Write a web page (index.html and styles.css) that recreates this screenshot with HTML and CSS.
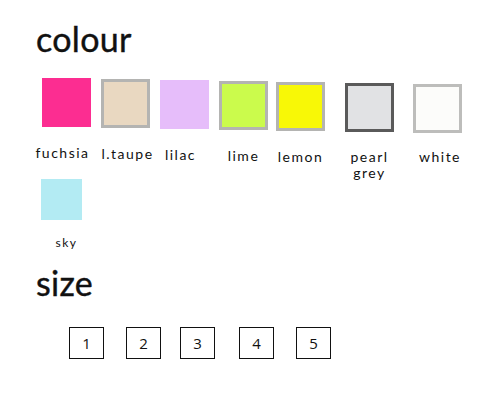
FILE: index.html
```html
<html lang="en"><head>
    <meta charset="UTF-8">
    <meta name="viewport" content="width=device-width, initial-scale=1.0">
    <title>Options</title>
    <link rel="stylesheet" href="styles.css">
</head>

<body>
    <div class="page">
        <h2 class="title">colour</h2>
        <div class="swatches">
            <div class="swatch_item"><div class="swatch fuchsia"></div><span>fuchsia</span></div>
            <div class="swatch_item"><div class="swatch taupe"></div><span>l.taupe</span></div>
            <div class="swatch_item"><div class="swatch lilac"></div><span>lilac</span></div>
            <div class="swatch_item"><div class="swatch lime"></div><span>lime</span></div>
            <div class="swatch_item"><div class="swatch lemon"></div><span>lemon</span></div>
            <div class="swatch_item"><div class="swatch pearl"></div><span>pearl<br>grey</span></div>
            <div class="swatch_item"><div class="swatch white"></div><span>white</span></div>
        </div>
        <div class="swatches row2">
            <div class="swatch_item small"><div class="swatch sky"></div><span>sky</span></div>
        </div>

        <h2 class="title size_title">size</h2>
        <div class="sizes">
            <div class="size_box">1</div>
            <div class="size_box">2</div>
            <div class="size_box">3</div>
            <div class="size_box">4</div>
            <div class="size_box">5</div>
        </div>
    </div>
</body>
</html>
```

FILE: styles.css
```css
body {
    margin: 0;
    background-color: #fff;
    font-family: "Lato", "Open Sans", sans-serif;
    color: #111;
}

.page {
    padding: 21px 0 0 36px;
}

.title {
    margin: 0;
    font-size: 34px;
    font-weight: 400;
    line-height: 36px;
    letter-spacing: 0.3px;
    -webkit-text-stroke: 0.4px #111;
}

.swatches {
    display: flex;
    gap: 10px;
    margin: 21px 0 0 6px;
}

.swatch_item {
    width: 49px;
    display: flex;
    flex-direction: column;
    align-items: center;
}

.swatch_item>span {
    white-space: nowrap;
    text-align: center;
    font-size: 14px;
    line-height: 16px;
    letter-spacing: 1.5px;
    margin-top: 18px;
    margin-right: 8px;
}

.swatch {
    width: 49px;
    height: 49px;
    box-sizing: border-box;
}

.swatch_item:nth-child(2) { margin-top: 1px; }
.swatch_item:nth-child(2)>span { margin-right: -4px; }
.swatch_item:nth-child(3) { margin-top: 2px; }
.swatch_item:nth-child(4) { margin-top: 3px; }
.swatch_item:nth-child(4)>span { margin-right: 0; }
.swatch_item:nth-child(5) { margin-top: 4px; margin-left: -2px; }
.swatch_item:nth-child(5)>span { margin-right: 0; }
.swatch_item:nth-child(6) { margin-top: 5px; margin-left: 10px; }
.swatch_item:nth-child(6)>span { margin-right: 0; margin-top: 17px; }
.swatch_item:nth-child(7) { margin-top: 6px; margin-left: 9px; }
.swatch_item:nth-child(7)>span { margin-right: -5px; margin-top: 16px; }

.fuchsia { background-color: #fc2d91; }
.taupe { background-color: #e9d8c1; border: 3px solid #b4b4b2; }
.lilac { background-color: #e6bdfa; }
.lime { background-color: #cbfb4c; border: 3px solid #b4b4b2; }
.lemon { background-color: #f8f806; border: 3px solid #b4b4b2; }
.pearl { background-color: #e1e2e4; border: 3px solid #5a5a5a; }
.white { background-color: #fcfcfa; border: 3px solid #bdbdbb; }
.sky { background-color: #b3ebf3; }

.row2 {
    margin: -2px 0 0 5px;
}

.swatch_item.small {
    width: 41px;
}

.swatch_item.small>.swatch {
    width: 41px;
    height: 41px;
}

.swatch_item.small>span {
    font-size: 12px;
    margin-top: 15px;
    margin-left: 10px;
    margin-right: 0;
}

.size_title {
    margin-top: 14px;
}

.sizes {
    display: flex;
    gap: 22px;
    margin: 26px 0 0 33px;
}

.size_box {
    width: 35px;
    height: 32px;
    box-sizing: border-box;
    border: 1px solid #111;
    display: flex;
    justify-content: center;
    align-items: center;
    font-family: "Open Sans", sans-serif;
    font-size: 15px;
    color: #111;
}

.size_box:nth-child(3) { margin-left: -3px; }
.size_box:nth-child(4) { margin-left: 2px; }
```
